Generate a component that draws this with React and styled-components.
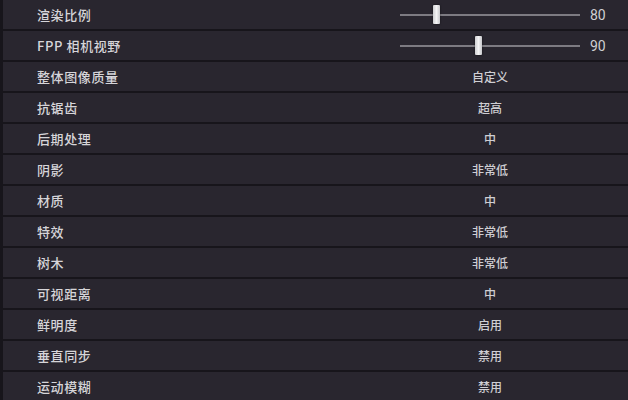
import React from 'react';
import styled, { createGlobalStyle } from 'styled-components';

const GlobalStyle = createGlobalStyle`
  html, body {
    margin: 0;
    padding: 0;
    background: #17151b;
    overflow: hidden;
  }
  body {
    font-family: "Noto Sans CJK SC", "Noto Sans", sans-serif;
  }
`;

const List = styled.div`
  display: flex;
  flex-direction: column;
  gap: 2px;
  width: 628px;
  height: 400px;
  padding-left: 3px;
  box-sizing: border-box;
  background: #17151b;
`;

const Row = styled.div`
  display: grid;
  grid-template-columns: 397px 180px 1fr;
  align-items: center;
  height: 29px;
  flex-shrink: 0;
  background: #29262f;
`;

const Label = styled.div`
  padding-left: 34px;
  font-size: 13px;
  font-weight: 500;
  letter-spacing: 0.6px;
  color: #d6d5d9;
`;

const Value = styled.div`
  text-align: center;
  font-size: 12px;
  font-weight: 500;
  color: #cfced3;
`;

const Track = styled.div`
  position: relative;
  height: 2px;
  background: #7d7b82;
`;

const Thumb = styled.div`
  position: absolute;
  top: -9px;
  width: 7px;
  height: 19px;
  margin-left: -3.5px;
  border-radius: 1px;
  background: linear-gradient(90deg, #cfcfd2, #f4f4f5 50%, #c8c8cc);
  box-shadow: 0 0 2px rgba(0, 0, 0, 0.6);
`;

const Number = styled.div`
  padding-left: 10px;
  font-family: Roboto, "Liberation Sans", sans-serif;
  font-size: 14px;
  color: #cfcfd3;
`;

const sliders = [
  { label: '渲染比例', value: 80, min: 70, max: 120 },
  { label: 'FPP 相机视野', value: 90, min: 80, max: 103 },
];

const options = [
  ['整体图像质量', '自定义'],
  ['抗锯齿', '超高'],
  ['后期处理', '中'],
  ['阴影', '非常低'],
  ['材质', '中'],
  ['特效', '非常低'],
  ['树木', '非常低'],
  ['可视距离', '中'],
  ['鲜明度', '启用'],
  ['垂直同步', '禁用'],
  ['运动模糊', '禁用'],
];

export default function App() {
  return (
    <>
      <GlobalStyle />
      <List>
        {sliders.map((s) => (
          <Row key={s.label}>
            <Label>{s.label}</Label>
            <Track>
              <Thumb style={{ left: `${((s.value - s.min) / (s.max - s.min)) * 100}%` }} />
            </Track>
            <Number>{s.value}</Number>
          </Row>
        ))}
        {options.map(([label, value]) => (
          <Row key={label}>
            <Label>{label}</Label>
            <Value>{value}</Value>
          </Row>
        ))}
      </List>
    </>
  );
}
